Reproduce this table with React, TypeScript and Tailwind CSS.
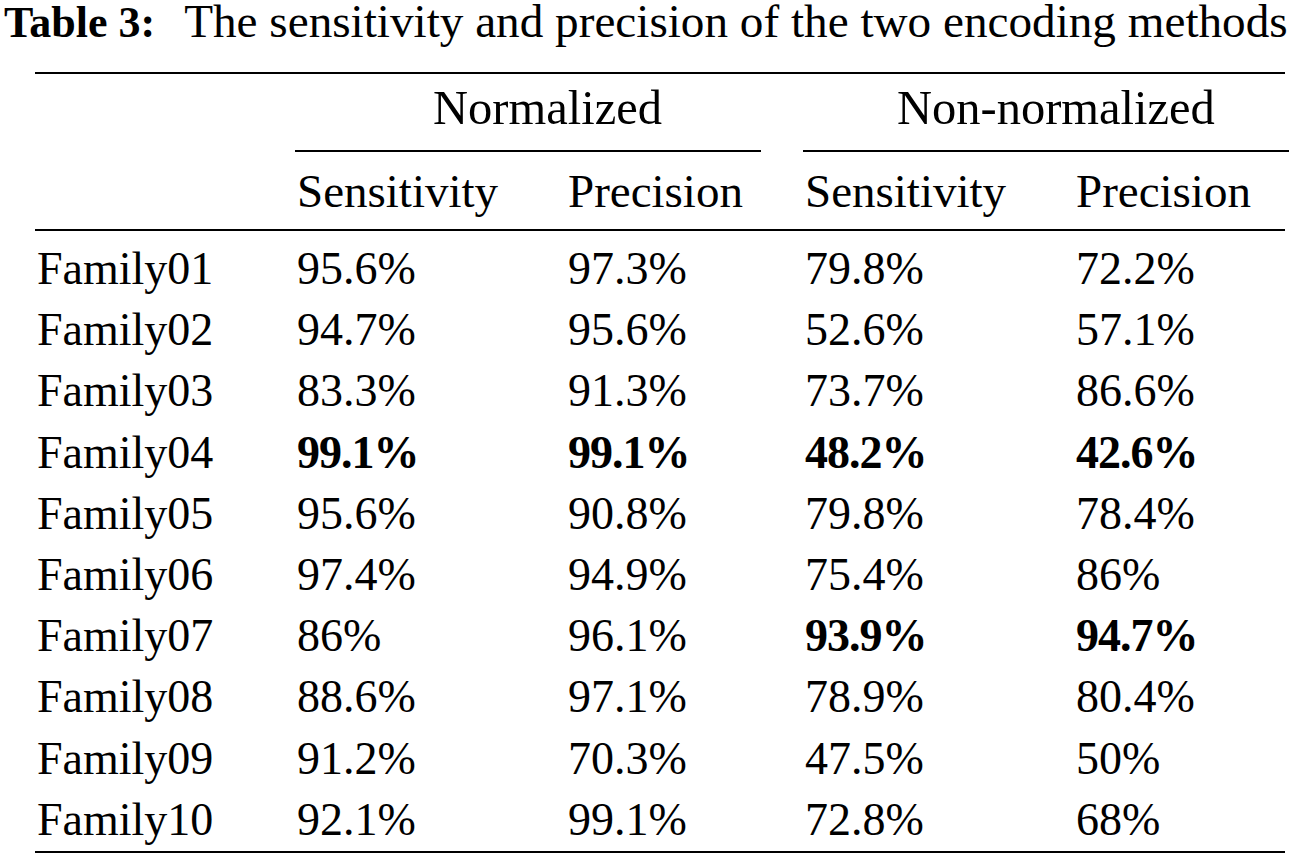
const rows: { name: string; vals: string[]; bold: boolean[] }[] = [
  { name: "Family01", vals: ["95.6%", "97.3%", "79.8%", "72.2%"], bold: [false, false, false, false] },
  { name: "Family02", vals: ["94.7%", "95.6%", "52.6%", "57.1%"], bold: [false, false, false, false] },
  { name: "Family03", vals: ["83.3%", "91.3%", "73.7%", "86.6%"], bold: [false, false, false, false] },
  { name: "Family04", vals: ["99.1%", "99.1%", "48.2%", "42.6%"], bold: [true, true, true, true] },
  { name: "Family05", vals: ["95.6%", "90.8%", "79.8%", "78.4%"], bold: [false, false, false, false] },
  { name: "Family06", vals: ["97.4%", "94.9%", "75.4%", "86%"], bold: [false, false, false, false] },
  { name: "Family07", vals: ["86%", "96.1%", "93.9%", "94.7%"], bold: [false, false, true, true] },
  { name: "Family08", vals: ["88.6%", "97.1%", "78.9%", "80.4%"], bold: [false, false, false, false] },
  { name: "Family09", vals: ["91.2%", "70.3%", "47.5%", "50%"], bold: [false, false, false, false] },
  { name: "Family10", vals: ["92.1%", "99.1%", "72.8%", "68%"], bold: [false, false, false, false] },
];

const cols = "grid grid-cols-[260px_271px_237px_271px_215px]";

export default function App() {
  return (
    <div className="w-[1312px] h-[862px] bg-white text-black overflow-hidden font-['Liberation_Serif','Times_New_Roman',serif]">
      {/* Caption */}
      <div className="h-[42px] pl-[4px] leading-[42px] whitespace-nowrap">
        <span className="text-[44px] font-bold">Table 3:</span>
        <span className="ml-[29px] text-[47.2px]">The sensitivity and precision of the two encoding methods</span>
      </div>

      <div className="ml-[35px] w-[1254px]">
        <div className="mt-[30px] h-[2px] w-[1250px] bg-black" />

        {/* Group headers */}
        <div className={`${cols} h-[76px] pt-[11px] text-[48.5px] leading-[46px]`}>
          <div />
          <div className="col-span-2 pl-[138px]">Normalized</div>
          <div className="col-span-2 pl-[94px]">Non-normalized</div>
        </div>
        <div className={`${cols} h-[2px]`}>
          <div />
          <div className="col-span-2 mr-[42px] bg-black" />
          <div className="col-span-2 bg-black" />
        </div>

        {/* Column headers */}
        <div className={`${cols} h-[77px] pt-[16px] text-[47px] leading-[46px]`}>
          <div />
          <div className="pl-[2px]">Sensitivity</div>
          <div className="pl-[2px]">Precision</div>
          <div className="pl-[2px]">Sensitivity</div>
          <div className="pl-[2px]">Precision</div>
        </div>
        <div className="h-[2px] w-[1250px] bg-black" />

        {/* Body */}
        <div className="pt-[7px] text-[46px] leading-[61.2px]">
          {rows.map((r) => (
            <div key={r.name} className={cols}>
              <div className="pl-[2px]">{r.name}</div>
              {r.vals.map((v, i) => (
                <div key={i} className={r.bold[i] ? "pl-[2px] font-bold tracking-[-1px]" : "pl-[2px]"}>
                  {v}
                </div>
              ))}
            </div>
          ))}
        </div>
        <div className="mt-[1px] h-[2px] w-[1250px] bg-black" />
      </div>
    </div>
  );
}
